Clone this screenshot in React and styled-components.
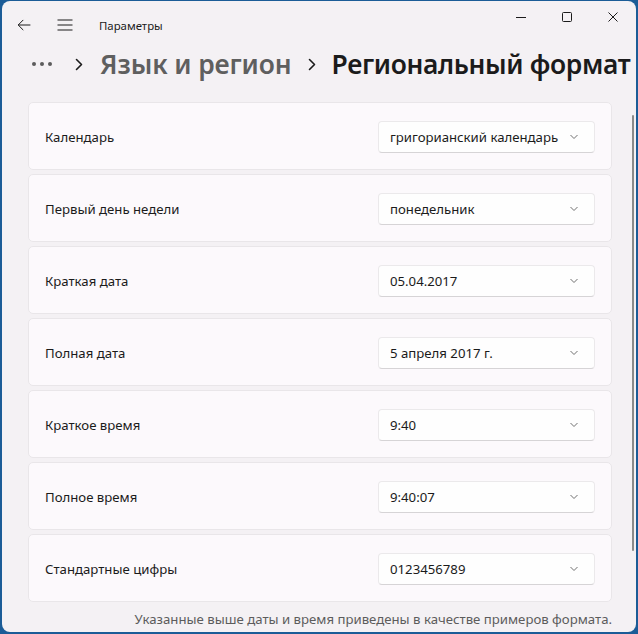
import React from "react";
import styled, { createGlobalStyle } from "styled-components";

const Global = createGlobalStyle`
  html, body { margin: 0; padding: 0; }
  body {
    background: #1b5c97;
    font-family: "Noto Sans", "Open Sans", sans-serif;
    width: 638px;
    height: 634px;
    overflow: hidden;
  }
`;

const Window = styled.div`
  margin: 1px 2px 0 2px;
  width: 634px;
  height: 631px;
  box-sizing: border-box;
  background: #f4f1f4;
  border-radius: 8px;
  overflow: hidden;
  position: relative;
  display: flex;
  flex-direction: column;
`;

const TitleBar = styled.div`
  display: flex;
  align-items: center;
  height: 48px;
  flex-shrink: 0;
`;

const NavGroup = styled.div`
  display: flex;
  align-items: center;
  padding-left: 12px;
  flex: 1;
  height: 100%;
`;

const NavButton = styled.div`
  width: 20px;
  height: 20px;
  display: flex;
  align-items: center;
  justify-content: center;
  margin-right: ${(p) => p.$mr || 0}px;
  color: #1b1b1b;
`;

const AppTitle = styled.span`
  font-size: 11.4px;
  color: #1b1b1b;
`;

const Captions = styled.div`
  display: flex;
  align-self: flex-start;
  height: 32px;
`;

const CaptionButton = styled.div`
  width: 46px;
  height: 32px;
  display: flex;
  align-items: center;
  justify-content: center;
  color: #1b1b1b;
`;

const Breadcrumb = styled.div`
  display: flex;
  align-items: center;
  height: 36px;
  margin-top: -3px;
  padding-left: 30px;
  white-space: nowrap;
`;

const Dots = styled.div`
  display: flex;
  gap: 4px;
  align-items: center;
  margin-right: 23px;
`;

const Dot = styled.span`
  width: 4px;
  height: 4px;
  border-radius: 50%;
  background: #5c5c5c;
`;

const Crumb = styled.span`
  font-size: 26.4px;
  font-weight: 600;
  color: ${(p) => (p.$current ? "#1b1b1b" : "#5f5f5f")};
  letter-spacing: ${(p) => (p.$current ? "-0.35px" : "-0.1px")};
`;

const Sep = styled.span`
  display: flex;
  align-items: center;
  margin: 0 ${(p) => p.$r}px 0 ${(p) => p.$l}px;
`;

const Content = styled.div`
  flex: 1;
  display: flex;
  flex-direction: column;
  gap: 4px;
  padding: 20px 24px 0 26px;
`;

const Card = styled.div`
  height: 68px;
  flex-shrink: 0;
  box-sizing: border-box;
  background: #fcf9fc;
  border: 1px solid #e9e6e9;
  border-radius: 5px;
  display: flex;
  align-items: center;
  justify-content: space-between;
  padding: 1px 16px 0 16px;
`;

const Label = styled.span`
  font-size: 13.2px;
  color: #1b1b1b;
`;

const Select = styled.div`
  width: 217px;
  height: 32px;
  box-sizing: border-box;
  background: #fefefe;
  border: 1px solid #ebe9eb;
  border-bottom-color: #d6d4d6;
  border-radius: 4px;
  display: flex;
  align-items: center;
  justify-content: space-between;
  padding: 0 15px 0 11px;
  font-size: 13.2px;
  color: #1b1b1b;
  white-space: nowrap;
`;

const Footer = styled.div`
  text-align: right;
  font-size: 13.2px;
  color: #5c5c5c;
  padding-top: 4px;
  white-space: nowrap;
`;

const Scrollbar = styled.div`
  position: absolute;
  right: 2px;
  top: 114px;
  width: 2px;
  height: 436px;
  border-radius: 1px;
  background: #8a8a8a;
`;

const Chevron = () => (
  <svg width="10" height="6" viewBox="0 0 10 6">
    <path d="M1.5 1 L5 4.5 L8.5 1" fill="none" stroke="#707070" strokeWidth="1" />
  </svg>
);

const BigChevron = () => (
  <svg width="8" height="13" viewBox="0 0 8 13">
    <path d="M1.5 1.5 L6.5 6.5 L1.5 11.5" fill="none" stroke="#1b1b1b" strokeWidth="1.6" strokeLinecap="round" strokeLinejoin="round" />
  </svg>
);

const rows = [
  ["Календарь", "григорианский календарь"],
  ["Первый день недели", "понедельник"],
  ["Краткая дата", "05.04.2017"],
  ["Полная дата", "5 апреля 2017 г."],
  ["Краткое время", "9:40"],
  ["Полное время", "9:40:07"],
  ["Стандартные цифры", "0123456789"],
];

export default function App() {
  return (
    <>
      <Global />
      <Window>
        <TitleBar>
          <NavGroup>
            <NavButton $mr={21}>
              <svg width="14" height="12" viewBox="0 0 14 12">
                <path d="M13 6 H1.5 M6 1.2 L1.2 6 L6 10.8" fill="none" stroke="#1b1b1b" strokeWidth="1" strokeLinecap="round" />
              </svg>
            </NavButton>
            <NavButton $mr={24}>
              <svg width="16" height="12" viewBox="0 0 16 12">
                <path d="M0.5 1 H15.5 M0.5 6 H15.5 M0.5 11 H15.5" fill="none" stroke="#1b1b1b" strokeWidth="1" />
              </svg>
            </NavButton>
            <AppTitle>Параметры</AppTitle>
          </NavGroup>
          <Captions>
            <CaptionButton>
              <svg width="10" height="10" viewBox="0 0 10 10">
                <path d="M0 5.5 H10" stroke="#1b1b1b" strokeWidth="1" />
              </svg>
            </CaptionButton>
            <CaptionButton>
              <svg width="10" height="10" viewBox="0 0 10 10">
                <rect x="0.5" y="0.5" width="9" height="9" rx="1" fill="none" stroke="#1b1b1b" strokeWidth="1" />
              </svg>
            </CaptionButton>
            <CaptionButton>
              <svg width="10" height="10" viewBox="0 0 10 10">
                <path d="M0.5 0.5 L9.5 9.5 M9.5 0.5 L0.5 9.5" stroke="#1b1b1b" strokeWidth="1" />
              </svg>
            </CaptionButton>
          </Captions>
        </TitleBar>
        <Breadcrumb>
          <Dots>
            <Dot />
            <Dot />
            <Dot />
          </Dots>
          <Sep $l={0} $r={17}>
            <BigChevron />
          </Sep>
          <Crumb>Язык и регион</Crumb>
          <Sep $l={16} $r={16}>
            <BigChevron />
          </Sep>
          <Crumb $current>Региональный формат</Crumb>
        </Breadcrumb>
        <Content>
          {rows.map(([label, value]) => (
            <Card key={label}>
              <Label>{label}</Label>
              <Select>
                <span>{value}</span>
                <Chevron />
              </Select>
            </Card>
          ))}
          <Footer>Указанные выше даты и время приведены в качестве примеров формата.</Footer>
        </Content>
        <Scrollbar />
      </Window>
    </>
  );
}
